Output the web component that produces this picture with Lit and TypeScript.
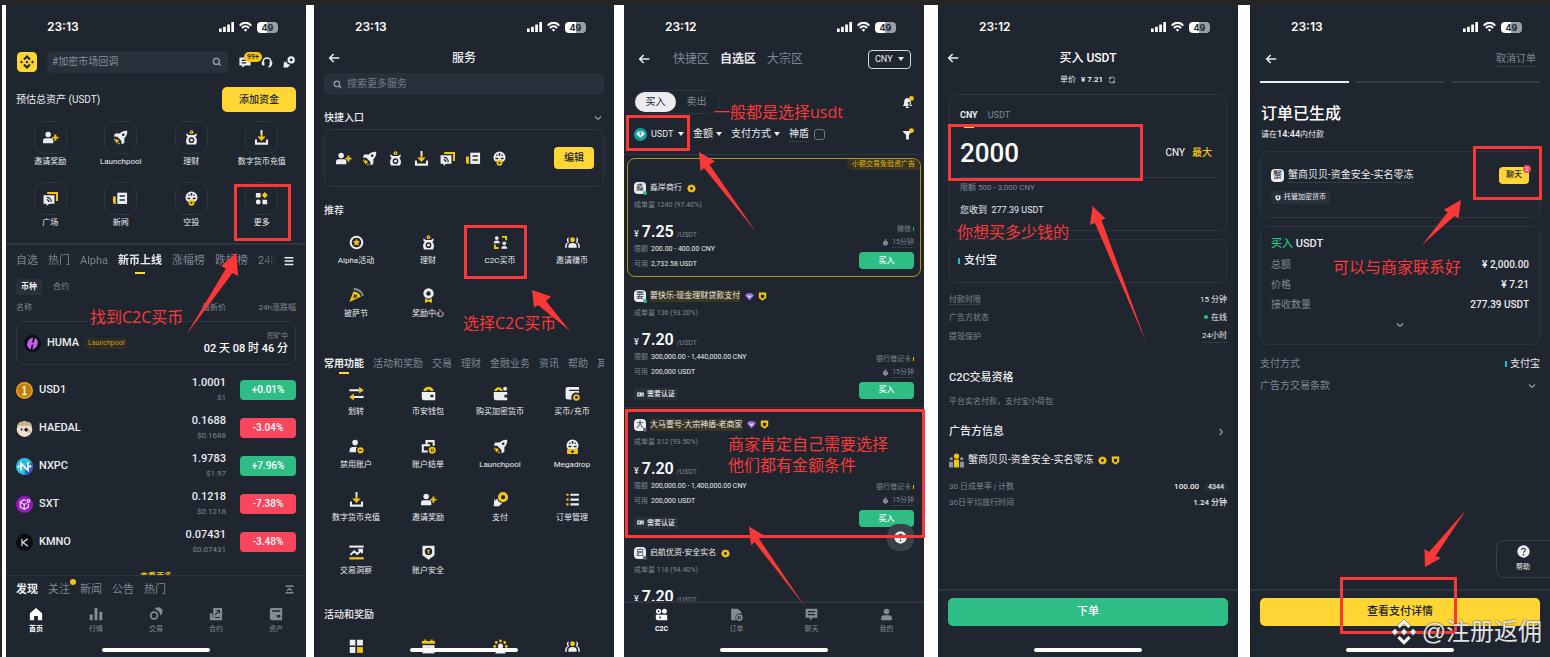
import { LitElement, html, svg, css, nothing } from "lit";
import { customElement, property } from "lit/decorators.js";
import { styleMap } from "lit/directives/style-map.js";
import { classMap } from "lit/directives/class-map.js";

/* ---------- icons: 16 x 16 grid, w = light parts, y = accent parts ---------- */

const ball = svg`
  <path class="w" d="M8 .6a6.400 6.400 0 0 0-6.400 6.400c0 1.700.8 3.100 1.800 4.100h9.200c1-1 1.800-2.400 1.800-4.100A6.400 6.400 0 0 0 8 .6z"/>
  <path class="k" d="M7.200 2.200h1.600v2.800H7.200zM3.400 7.200h3.300v1.500H4a4 4 0 0 1-.6-1.500zM9.300 7.200h3.300a4 4 0 0 1-.6 1.500H9.300zM4.600 3.800h1.300v1.500H4.600zM10.100 3.800h1.300v1.500h-1.300z"/>`;

const ICONS: Record<string, unknown> = {
  invite: svg`<circle class="w" cx="5.500" cy="4.700" r="2.900"/><path class="w" d="M0 14v-2.600C0 9.500 1.200 8.700 2.600 8.700h6c1.400 0 2.400.8 2.400 2.700V14z"/><path class="y" d="M12.200 4.800h2v2.300h2.300v2h-2.300v2.300h-2V9.100H9.900v-2h2.300z"/>`,
  rocket: svg`<path class="w" d="M15.200.8c-3.600-.2-5.900.8-7.900 3H2.200L.9 6.800l3.600.4 4.300 4.300.3 3.700 3-1.400V8.700c2.200-2 3.300-4.300 3.100-7.900z"/><circle class="k" cx="10.900" cy="5.100" r="1.400"/><path class="y" d="M4 9.200l1.100 1.500 1.600.9-1.600 1L4 14.600l-1-2-1.700-1 1.700-.9zM1 9.200h1.500v1.500H1zM5.600 13.600h1.500v1.500H5.600z"/>`,
  earn: svg`<circle class="y" cx="8" cy="2.300" r="2"/><circle class="k" cx="8" cy="2.300" r=".7"/><path class="w" d="M2.600 3.400l2.600 1.800h5.600l2.600-1.800v3l-1.500.8c1.300 1.300 1.900 2.900 1.900 4.600 0 1.400-.4 2.600-1 3.600H3.200c-.6-1-1-2.200-1-3.600 0-1.700.6-3.300 1.900-4.600l-1.500-.8z"/><circle class="k" cx="8" cy="10.800" r="3"/><circle class="w" cx="8" cy="10.800" r="1.500"/>`,
  deposit: svg`<path class="w" d="M7 0h2v5H7zM1 10h2.200v3.300h9.600V10H15v5.600H1z"/><path class="y" d="M7 4h2v3h3.500L8 11.700 3.500 7H7z"/>`,
  square: svg`<path class="y" d="M4.500 1H16v9.700h-2.200V3.200H4.500z"/><path class="w" d="M.6 4.400h11.600v9.200H6.800l-3 2.100v-2.100H.6z"/><path class="ks" d="M4 6.800c2.800 0 4.800 2 4.800 4.800M4 9.300c1.300 0 2.200 1 2.200 2.300"/>`,
  news: svg`<path class="y" d="M0 5.800h3v8H2.200A2.200 2.200 0 0 1 0 11.600z"/><path class="w" d="M4.600 1.800H15v12H4.600z"/><path class="k" d="M7.100 4.500h5.500v1.700H7.100zM7.100 8.800h5.500v1.600H7.100z"/>`,
  airdrop: svg`${ball}<circle class="yr" cx="8" cy="12.600" r="2.200"/>`,
  mega: svg`${ball}<path class="y" d="M2.200 10.800h11.600v5.200H2.200z"/><path class="k" d="M7.300 11.900h1.400v1h1v1.100h-1v1H7.300v-1h-1v-1.100h1z"/>`,
  more: svg`<path class="w" d="M2 2h5v5H2zM9 9.200h5v5H9z"/><circle class="w" cx="4.500" cy="11.700" r="2.600"/><path class="y" d="M11.500 1l3.300 3.400-3.300 3.400-3.300-3.400z"/>`,
  alpha: svg`<circle class="wr" cx="8" cy="8" r="6.200"/><path class="y" d="M8 4l1.200 2.500 2.700.3-2 1.900.6 2.700L8 10l-2.500 1.400.6-2.700-2-1.900 2.700-.3z"/>`,
  c2c: svg`<circle class="w" cx="4" cy="3.300" r="2"/><path class="w" d="M.8 8.700c0-2 1-2.900 3.200-2.900s3.200.9 3.200 2.900z"/><circle class="w" cx="12" cy="8.800" r="2"/><path class="w" d="M8.800 14.600c0-2 1-2.900 3.200-2.900s3.200.9 3.200 2.900z"/><path class="y" d="M9.500 1H15v4.600h-2V3H9.500zM1 10.200h2v2.700h3v2H1z"/>`,
  people: svg`<circle class="y" cx="8" cy="5" r="2.600"/><path class="w" d="M3.600 13.600V12c0-2.200 1.600-3.400 4.400-3.400s4.400 1.200 4.400 3.400v1.600zM4.200 2.300C2.600 2.700 2 4 2 5.200c0 1 .4 1.800 1 2.400C1.200 8.400.2 9.800.2 11.800v1.800h1.700v-2c0-1.900.8-3 2.400-4C3.500 6.200 3.300 4 4.200 2.300zM11.800 2.300C13.400 2.700 14 4 14 5.200c0 1-.4 1.800-1 2.400 1.800.8 2.800 2.200 2.800 4.200v1.800h-1.700v-2c0-1.900-.8-3-2.400-4 .8-1.400 1-3.600.1-5.300z"/>`,
  pizza: svg`<path class="g" d="M5.200 0c5.200 0 9.300 3.200 10.700 8l-1.900.7C12.800 4.700 9.600 2.300 5 2.200z"/><path class="y" d="M4.700 3.600c4 .2 6.800 2.400 8 5.800L.3 14.800z"/><path class="ks" d="M5 10.400l1.200-3.600M7.200 10.800l1-3.400M5.400 8.200l3 .8"/>`,
  reward: svg`<circle class="w" cx="8" cy="5.800" r="5.500"/><circle class="k" cx="8" cy="5.800" r="2.400"/><path class="y" d="M4.300 11l3.700 1.800 3.700-1.800v5L8 14.300 4.300 16z"/>`,
  transfer: svg`<path class="w" d="M.4 3.400h11v2.100H.4zM4.600 10.700h11v2.100h-11z"/><path class="y" d="M10.800.7l5 3.700-5 3.700zM5.200 8l-5 3.700 5 3.700z"/>`,
  wallet: svg`<path class="y" d="M2.400 5.400C3.200 2.400 5.200.9 8 .9s4.800 1.500 5.600 4.500h-3.300C9.700 4.200 9 3.700 8 3.700s-1.700.5-2.300 1.700z"/><path class="w" d="M.8 6.400h14.400v8.800H3.200A2.400 2.400 0 0 1 .8 12.800z"/><path class="k" d="M10 9.400h3.200V12H10z"/>`,
  buycrypto: svg`<path class="y" d="M1.200 5.400C2 2.600 3.600 1.200 6 1.200s3.800 1.400 4.600 4.200H7.800C7.400 4.400 6.800 3.900 6 3.900s-1.400.5-1.800 1.500z"/><circle class="w" cx="12.900" cy="3" r="2.100"/><path class="w" d="M.8 6.400h14.400v2.800h-3v3h3v3H3.200A2.400 2.400 0 0 1 .8 12.800z"/>`,
  buyfill: svg`<path class="w" d="M3 1h12v3H4.600v1.400H15v2.100c-1-.4-2-.6-3-.6-3 0-5.200 2.200-5.200 5 0 1 .2 1.800.6 2.500H3a2.400 2.400 0 0 1-2.400-2.400V3.400A2.400 2.400 0 0 1 3 1z"/><circle class="yr" cx="12.200" cy="12.200" r="2.500"/>`,
  banuser: svg`<circle class="w" cx="6.500" cy="3.800" r="3"/><path class="w" d="M.6 14v-2.200c0-2 1.300-3.400 3.200-3.400h4.800c-.9 1-1.300 2.100-1.300 3.300 0 .9.200 1.600.6 2.300z"/><circle class="y" cx="12.300" cy="12" r="3.300"/><path class="k" d="M10.600 11.400H14v1.200h-3.400z"/>`,
  statement: svg`<path class="w" d="M4.800 1h9.800v6.200h-2.200V3.400H7v2.200h2.600v2.100H3v4.500h4.200v2.100H.8V5.600h4z"/><circle class="yr" cx="12" cy="11.900" r="2.700"/><path class="y" d="M11.400 10.500h1.200V13h-1.200z"/>`,
  pay: svg`<circle class="yw" cx="10.700" cy="5.500" r="3.800"/><path class="w" d="M1.600 6.600L.7 15.200h5.600l3.500-3.600c-3 0-4.900-1.800-5.200-4.600L2.600 9z"/>`,
  orders: svg`<path class="y" d="M1.500 1.800h2.300v2.300H1.500zM1.500 6.900h2.300v2.300H1.500zM1.500 12h2.300v2.300H1.500z"/><path class="w" d="M5.800 1.800h9v2.300h-9zM5.800 6.900h9v2.300h-9zM5.800 12h9v2.300h-9z"/>`,
  insight: svg`<path class="w" d="M.4.600h15.200v2.200H.4z"/><path class="ws" d="M1.500 10.500L5.500 6.700l3.200 2.800 4.800-4.200M9.900 5h4v3.900"/><path class="y" d="M.4 13h15.200v2.400H.4z"/>`,
  security: svg`<path class="w" d="M1.600.8h12.800v10L8 15.600l-6.400-4.800z"/><circle class="k" cx="8" cy="6.800" r="3.900"/><path class="y" d="M8 4.400l1.800 1.900h-1v3H7.200v-3h-1z"/>`,
  tiles: svg`<path class="w" d="M.8.8h6v6h-6zM8.600.8h6.200v6H8.600zM.8 8.600h6v6.200h-6z"/><path class="y" d="M8.600 8.600h6.200v6.200H8.600z"/>`,
  calendar: svg`<path class="y" d="M1 2h2.500V.4h2V2h5V.4h2V2H15v3H1z"/><path class="w" d="M1.600 6.600h12.800v8.800H1.600z"/><path class="k" d="M4 9.500h6.500v1.500H4z"/>`,
  party: svg`<circle class="y" cx="8" cy="2" r="1.500"/><circle class="y" cx="3.500" cy="3.700" r="1.500"/><circle class="y" cx="12.500" cy="3.700" r="1.500"/><circle class="y" cx="1.800" cy="8" r="1.500"/><circle class="y" cx="14.200" cy="8" r="1.500"/><circle class="w" cx="8" cy="7.600" r="2.700"/><path class="w" d="M2.600 15.500c0-3 2-4.500 5.400-4.500s5.400 1.500 5.400 4.500z"/>`,
  logo: svg`<rect class="brand" width="16" height="16" rx="3.600"/><path class="k" d="M8 2.400l3 3-1.200 1.200L8 4.800 6.200 6.600 5 5.400zM3.600 6.800L4.800 8 3.600 9.200 2.400 8zM12.400 6.800L13.600 8l-1.200 1.200L11.200 8zM5 10.600l1.200-1.200L8 11.200l1.800-1.800 1.200 1.200-3 3zM8 6.800L9.200 8 8 9.200 6.800 8z"/>`,
  diamond: svg`<path class="w" d="M8 0l4.200 4.200-1.500 1.500L8 3 5.300 5.700 3.800 4.200zM2.400 5.900L4.500 8l-2.100 2.100L.3 8zM13.600 5.900L15.700 8l-2.100 2.100L11.500 8zM3.800 11.800l1.500-1.500L8 13l2.700-2.700 1.500 1.500L8 16zM8 5.900L10.100 8 8 10.100 5.900 8z"/>`,
  search: svg`<circle class="ln" cx="7" cy="7" r="4.800"/><path class="ln" d="M10.600 10.600l3.600 3.600"/>`,
  chat: svg`<path class="w" d="M.6 2h14.800v10.600H8l-3.600 3v-3H.6z"/><path class="k" d="M3.500 5h9v1.700h-9zM3.500 8.300h6V10h-6z"/>`,
  headset: svg`<path class="ws" d="M2.800 9.500V7.800a5.200 5.200 0 0 1 10.400 0v3.600c0 1.700-1.200 2.900-3.400 2.900"/><path class="w" d="M1 7.500h3.500v5.300H3A2 2 0 0 1 1 10.800zM15 7.500h-3.500v5.300H13a2 2 0 0 0 2-2z"/>`,
  paywhite: svg`<circle class="wt" cx="10.900" cy="5.200" r="3.400"/><path class="w" d="M1.400 6.600L.6 15.200h5.800l3.400-3.800c-3 0-4.900-1.700-5.200-4.500L2.600 9z"/>`,
  back: svg`<path class="ws" d="M15 8H2.400M7.600 2.600L2.200 8l5.400 5.400"/>`,
  down: svg`<path class="ln" d="M2 5l6 6 6-6"/>`,
  right: svg`<path class="ln" d="M5 2l6 6-6 6"/>`,
  menu: svg`<path class="w" d="M1 1.500h14v2.300H1zM1 6.900h14v2.300H1zM1 12.300h14v2.300H1z"/>`,
  collapse: svg`<path class="ln" d="M1 2h14M1 14h14M3.500 10.500L8 6.500l4.500 4"/>`,
  home: svg`<path class="c" d="M8 1l7 6.200V15h-4.800v-4.600H5.800V15H1V7.200z"/>`,
  bars: svg`<path class="c" d="M.8 8.500h3.400V15H.8zM6.300 1h3.400v14H6.300zM11.800 5.500h3.400V15h-3.400z"/>`,
  trade: svg`<circle class="cr" cx="5.800" cy="9.800" r="3.900"/><path class="c" d="M6.400 2.600A4.900 4.900 0 0 1 15.400 5.600c0 1.700-.9 3.200-2.400 4.100C12.800 6.200 10.200 3.200 6.400 2.600z"/>`,
  futures: svg`<path class="c" d="M4.800 1H15v14H1V7.200h3v4.600h.8z"/><path class="ks" d="M6.600 12h6M7 9l4.800-4.800M8.600 4h3.400v3.400"/>`,
  assets: svg`<path class="c" d="M3.400 1H15v14H3.400A2.400 2.400 0 0 1 1 12.600V3.400A2.400 2.400 0 0 1 3.400 1z"/><path class="k" d="M3.600 3.600h9.200v1.700H3.600zM9 9h4v3H9z"/>`,
  c2cnav: svg`<circle class="cr" cx="4.400" cy="4" r="2.200"/><circle class="c" cx="11.600" cy="4" r="3"/><path class="c" d="M1 8.400h14V15H3.400A2.400 2.400 0 0 1 1 12.600z"/><path class="k" d="M5.600 10.400h1.600V13H5.600z"/>`,
  ordernav: svg`<path class="c" d="M1.400 1h8.200L14 5v2.200c-.8-.3-1.600-.4-2.400-.4A5 5 0 0 0 6.600 12c0 1.100.3 2.100.9 3H1.400z"/><circle class="cr" cx="11.600" cy="11.800" r="3.200"/><path class="cl" d="M11.600 10v2h1.600"/>`,
  chatnav: svg`<path class="c" d="M.8 1h14.400v11H9.400L6 15.400V12H.8z"/><path class="k" d="M3.600 3.800h8.800v1.500H3.600zM3.600 7.400h8.800v1.500H3.600z"/>`,
  user: svg`<circle class="c" cx="8" cy="4.400" r="3.400"/><path class="c" d="M1.400 15v-2.600c0-2 1.400-3.400 3.400-3.400h6.400c2 0 3.400 1.400 3.400 3.400V15z"/>`,
  bell: svg`<path class="w" d="M6.400 2.600c3 0 5 2 5.200 4.700L12 11l1.600 2.200H1L2.600 11 3 7c.2-2.400 1.200-3.800 3.400-4.400z"/><path class="w" d="M5 14h4v2H5z"/><path class="ks" d="M10.500 8.500H8.300v1.800h2.200v2H8"/><circle class="y" cx="12.600" cy="3.200" r="3.200"/>`,
  funnel: svg`<path class="w" d="M.6 4h13L9.200 9.400v6H5.400v-6z"/><circle class="y" cx="12.600" cy="3.400" r="3.200"/>`,
  tether: svg`<circle class="teal" cx="8" cy="8" r="8"/><path class="w" d="M4.800 4.200h6.400l2 3.300L8 12.400 2.800 7.500z"/><path class="teal" d="M6 5.500h4v1H8.600V9H7.400V6.500H6z"/>`,
  medal: svg`<path class="y" d="M8 .5l2.300 1.600 2.800.1.900 2.700L15.800 8 14 11.100l-.9 2.700-2.800.1L8 15.500l-2.300-1.600-2.800-.1-.9-2.700L.2 8 2 4.900l.9-2.700 2.800-.1z"/><circle class="k" cx="8" cy="8" r="2.600"/>`,
  gem: svg`<path class="violet" d="M3.600 2h8.800L16 6.400 8 15 0 6.400z"/><path class="ws" d="M4.800 6.400L8 9.200l3.200-2.800"/>`,
  badge: svg`<path class="y" d="M1.400 1h13.200v9.600L8 15.400l-6.600-4.800z"/><path class="k" d="M5 5h6v4.200L8 11.400 5 9.200z"/>`,
  shield: svg`<path class="w" d="M1.400 1h13.200v9.400L8 15.400l-6.600-5z"/><path class="k" d="M5.400 4.600h5.200v3.600L8 10.400 5.400 8.200z"/>`,
  timer: svg`<circle class="g" cx="8" cy="9.600" r="5.600"/><path class="g" d="M5.600 1h4.800v2.400H5.600z"/><path class="ks" d="M8 7v3.200"/>`,
  id: svg`<path class="w" d="M.5 3.500h15v9H.5z"/><path class="k" d="M3 6.500h3.500v3H3zM9 6.500h4.500v1H9zM9 9h4.500v1H9z"/>`,
  refresh: svg`<path class="ln" d="M13.800 6.600A6 6 0 0 0 3 4.500V2M3 5.300h3.500M2.200 9.400A6 6 0 0 0 13 11.500V14M13 10.700H9.500"/>`,
  help: svg`<circle class="w" cx="8" cy="8" r="7.600"/><path class="ks" d="M5.700 6.300C5.700 4.800 6.700 4 8 4s2.300.8 2.300 2.100c0 1.500-2.300 1.600-2.300 3.400"/><circle class="k" cx="8" cy="12" r="1"/>`,
  huma: svg`<circle class="blk" cx="8" cy="8" r="8"/><path class="pink" d="M8.500 2.200L6.400 13.400C4 12.800 2.600 10.500 3 8c.4-2.800 2.600-4.800 5.500-5.800zM10.300 2.800c2 .8 3 2.700 2.700 5-.4 3-2.400 5-5.200 6z"/><path class="pink" d="M6 7.200h4.200v1.900H6z"/>`,
  usd1: svg`<circle class="gold2" cx="8" cy="8" r="8"/><circle class="gold1" cx="8" cy="8" r="6.700"/><path class="cream" d="M6 4.800L8.800 3.400V11h1.500v1.400H5.800V11h1.400V5.600L6 6z"/>`,
  haedal: svg`<circle class="sand" cx="8" cy="8.600" r="7.300"/><path class="brown" d="M.8 5.400L3 2.200l3-.8L8 .8l2.400.8 3 .8 1.800 3-2 .4-1.600-.8-1.800 1-1.800-1-2 1-2-.8-1.800.6z"/><circle class="blk" cx="5.300" cy="9" r=".9"/><circle class="blk" cx="9.600" cy="9.200" r="1.700"/><circle class="tan" cx="12.300" cy="10.800" r="1.300"/><path class="w" d="M6 11.600h4l-2 2z"/>`,
  nxpc: svg`<circle class="cyan" cx="8" cy="8" r="8"/><path class="blue" d="M8 16A8 8 0 0 0 15 4L9 8z"/><path class="nx" d="M4.600 12V5l6.600 6.400V4M2.500 9.500V7M13.400 9.200V6.500"/>`,
  sxt: svg`<circle class="purple" cx="8" cy="8" r="8"/><path class="thin" d="M9 4.200L7.600 3.500 4 5.600v4.800l3.800 2.200 3.800-2.200V7.400M4.200 5.800l3.500 2.200v4.400M7.800 8l2-1.200"/><circle class="thin" cx="11.600" cy="4.700" r="1.300"/>`,
  kmno: svg`<circle class="blk" cx="8" cy="8" r="7.900"/><path class="thin" d="M5.600 4.600v6.800M11 4.500L6.600 8l4.600 3.500"/>`,
  team: svg`<circle class="y" cx="8" cy="3.400" r="2.800"/><path class="y" d="M5.300 7h5.400v8.400H5.300z"/><path class="g" d="M0 9.200h4.400v6.200H0zM11.600 9.200H16v6.200h-4.400z"/><circle class="g" cx="2.400" cy="6" r="1.800"/><circle class="g" cx="13.600" cy="6" r="1.800"/>`,
};

const icon = (name: string, size = 15) =>
  html`<svg class="ico" width=${size} height=${size} viewBox="0 0 16 16" aria-hidden="true">${ICONS[name]}</svg>`;

const base = css`
  :host {
    --bg: #202630;
    --panel: #29303b;
    --line: #2e3540;
    --text: #eaecef;
    --muted: #7d8693;
    --gold: #f5c40c;
    --brand: #ffd633;
    --green: #2ebd85;
    --red: #f9465d;
    display: flex;
    flex-direction: column;
    flex: 1;
    min-width: 0;
    position: relative;
    overflow: hidden;
    background: var(--bg);
    color: var(--text);
    font-family: Roboto, "Noto Sans CJK SC", sans-serif;
    font-size: 10px;
    line-height: 14px;
  }
  * { box-sizing: border-box; }
  h1, h2, p, dl, dd, dt { margin: 0; font-weight: inherit; font-size: inherit; }
  button, input, select { font: inherit; color: inherit; background: none; border: 0; padding: 0; margin: 0; outline: 0; min-width: 0; }
  select { appearance: none; }
  a { color: inherit; text-decoration: none; }
  .ico { display: block; flex: none; overflow: visible; }
  .w { fill: #eceef0; } .y { fill: var(--gold); } .k { fill: var(--bg); } .g { fill: #8c939e; }
  .c { fill: currentColor; } .brand { fill: var(--brand); }
  .ws { fill: none; stroke: #eceef0; stroke-width: 2; }
  .ks { fill: none; stroke: var(--bg); stroke-width: 1.3; }
  .wr { fill: none; stroke: #eceef0; stroke-width: 2.200; }
  .wt { fill: none; stroke: #eceef0; stroke-width: 3; }
  .yr { fill: var(--bg); stroke: var(--gold); stroke-width: 2; }
  .yw { fill: none; stroke: var(--gold); stroke-width: 3.200; }
  .cr { fill: none; stroke: currentColor; stroke-width: 2; }
  .cl { fill: none; stroke: currentColor; stroke-width: 1.300; }
  .ln { fill: none; stroke: #98a0ab; stroke-width: 2.200; }
  .teal { fill: #14a09c; } .violet { fill: #a06ae8; } .blk { fill: #090c11; } .pink { fill: #c95bf0; }
  .gold1 { fill: #c27a0a; } .gold2 { fill: #eaa628; } .cream { fill: #fff0c0; } .sand { fill: #efdfca; } .tan { fill: #d8a988; }
  .brown { fill: #c9b18c; } .cyan { fill: #29c0e0; } .blue { fill: #2f5ad8; } .purple { fill: #9a17c4; }
  .nx { fill: none; stroke: #fff; stroke-width: 1.700; } .thin { fill: none; stroke: #e8e8ee; stroke-width: 1.100; }
  .tabs { display: flex; align-items: stretch; white-space: nowrap; overflow: hidden; color: var(--muted); }
  .tab { flex: none; position: relative; }
  .tab.on { color: var(--text); font-weight: 700; }
  .line.on::after { content: ""; position: absolute; left: 50%; bottom: 2px; width: 10px; margin-left: -5px; height: 2px; background: var(--brand); }
  .between { display: flex; justify-content: space-between; align-items: center; }
  .card { border: 1px solid var(--line); border-radius: 8px; }
  .muted { color: var(--muted); }
  .yellow { background: var(--brand); color: #202630; border-radius: 4px; font-weight: 500; text-align: center; }
  .dots { border-bottom: 1px dotted #4a515d; }
  .bar { align-self: center; width: 108px; height: 4px; border-radius: 2px; background: #fff; flex: none; }
  .nav { display: flex; }
  .nav a { flex: 1; display: flex; flex-direction: column; align-items: center; gap: 3px; font-size: 7px; line-height: 10px; color: #848b96; }
  .nav a.on { color: #fff; font-weight: 700; }
  .foot { margin-top: auto; border-top: 2px solid var(--line); padding: 7px 10px 5px; display: flex; flex-direction: column; }
  .foot .go { height: 28px; border-radius: 5px; font-size: 11px; font-weight: 500; }
  .foot .bar { margin-top: 22px; }
`;

@customElement("status-bar")
class StatusBar extends LitElement {
  @property() time = "23:13";
  static styles = css`
    :host { display: flex; align-items: center; height: 44px; flex: none; padding: 0 28px 0 41px; color: #fff; }
    .time { flex: 1; font: 600 12px/16px Inter, sans-serif; }
    .set { display: flex; align-items: center; gap: 5px; }
    .batt { width: 21px; height: 11px; border-radius: 4px; background: linear-gradient(90deg, #fff 50%, #9a9ea5 50%); color: #202630; font: 700 9px/11px Inter, sans-serif; text-align: center; }
    .f { fill: #fff; }
    .s { fill: none; stroke: #fff; stroke-width: 2; }
  `;
  render() {
    return html`<span class="time">${this.time}</span>
      <span class="set">
        <svg width="15" height="10" viewBox="0 0 15 10"><path class="f" d="M0 6.500h2.700V10H0zM4.100 4.800h2.700V10H4.100zM8.200 2.400h2.700V10H8.200zM12.300 0H15v10h-2.700z"/></svg>
        <svg width="13" height="10" viewBox="0 0 13 10"><path class="s" d="M.8 3.600C4-.3 9-.3 12.200 3.600M3 6c2-2.200 5-2.200 7 0"/><path class="f" d="M4.700 7.700c1.100-1 2.500-1 3.600 0L6.500 9.800z"/></svg>
        <span class="batt">49</span>
      </span>`;
  }
}

/* ---------- home ---------- */

const SHORTCUTS = [
  ["invite", "邀请奖励"], ["rocket", "Launchpool"], ["earn", "理财"], ["deposit", "数字货币充值"],
  ["square", "广场"], ["news", "新闻"], ["airdrop", "空投"], ["more", "更多"],
];
const COINS = [
  ["usd1", "USD1", "1.0001", "$1", "+0.01%"],
  ["haedal", "HAEDAL", "0.1688", "$0.1688", "-3.04%"],
  ["nxpc", "NXPC", "1.9783", "$1.97", "+7.96%"],
  ["sxt", "SXT", "0.1218", "$0.1218", "-7.38%"],
  ["kmno", "KMNO", "0.07431", "$0.07431", "-3.48%"],
];

@customElement("screen-home")
class ScreenHome extends LitElement {
  static styles = [base, css`
    .top { display: flex; align-items: center; height: 26px; padding: 0 11px; flex: none; }
    .find { flex: 1; display: flex; align-items: center; height: 22px; margin: 0 11px 0 10px; padding: 0 6px 0 5px; border-radius: 5px; background: var(--panel); }
    .find input { flex: 1; }
    .find input::placeholder { color: #858d99; }
    .acts { display: flex; gap: 10px; position: relative; }
    .count { position: absolute; left: 5px; top: -4px; padding: 0 3px; height: 10px; border-radius: 5px; background: var(--gold); color: #202630; font-size: 7px; line-height: 10px; font-weight: 500; }
    .total { margin: 12px 10px 0; height: 25px; flex: none; }
    .total .yellow { width: 74px; height: 25px; border-radius: 5px; }
    .grid { display: grid; grid-template-columns: repeat(4, 1fr); row-gap: 13px; padding: 0 9px; margin-top: 9px; }
    .grid a { display: flex; flex-direction: column; align-items: center; gap: 1px; font-size: 8px; line-height: 14px; white-space: nowrap; }
    .tile { width: 33px; height: 33px; border: 1px solid var(--line); border-radius: 11px; display: grid; place-items: center; }
    .cats { display: flex; align-items: center; margin-top: 13px; border-top: 2px solid var(--line); height: 33px; padding: 0 12px 0 10px; font-size: 11px; flex: none; }
    .cats .tabs { flex: 1; gap: 10px; height: 31px; margin-right: 7px; mask-image: linear-gradient(90deg, #000 94%, transparent); }
    .kinds { display: flex; gap: 6px; margin: 3px 10px 0; font-size: 8px; line-height: 16px; flex: none; }
    .kinds button { padding: 0 5px; border-radius: 3px; color: var(--muted); }
    .kinds .on { background: var(--panel); color: var(--text); font-weight: 700; }
    .wrap { flex: 1; min-height: 0; overflow: hidden; padding: 0 10px; display: flex; flex-direction: column; }
    table { width: 100%; border-collapse: collapse; table-layout: fixed; flex: none; }
    th { height: 26px; padding: 0; font-size: 8px; font-weight: 400; color: var(--muted); text-align: right; }
    th:first-child { text-align: left; }
    th:nth-child(2) { width: 80px; } th:last-child { width: 70px; }
    td { height: 38px; padding: 0; text-align: right; }
    .hot td { height: 50px; vertical-align: top; }
    .hot .card { height: 44px; padding: 0 7px; text-align: left; }
    .coin { display: flex; align-items: center; gap: 6px; font-size: 11px; font-weight: 500; }
    .lp { background: #2f2c26; color: #c89d10; font-size: 7px; line-height: 11px; padding: 0 3px; border-radius: 2px; font-weight: 400; }
    .left { text-align: right; color: #fff; font-weight: 500; font-size: 11px; }
    .left small { display: block; font-size: 7px; line-height: 12px; color: var(--muted); font-weight: 400; }
    .price { font-size: 11px; font-weight: 500; line-height: 15px; }
    .price small { display: block; font-size: 8px; font-weight: 400; color: var(--muted); }
    .pct { display: inline-block; width: 56px; line-height: 20px; border-radius: 4px; background: var(--green); color: #fff; font-weight: 500; text-align: center; vertical-align: middle; }
    .pct.dn { background: var(--red); }
    .all { color: var(--gold); font-size: 8px; line-height: 9px; margin-top: 11px; font-weight: 700; }
    .dock { border-top: 1px solid var(--line); display: flex; flex-direction: column; flex: none; padding-bottom: 5px; }
    .feed { display: flex; align-items: center; justify-content: space-between; height: 27px; padding: 0 12px 0 10px; font-size: 11px; }
    .feed .tabs { gap: 10px; overflow: visible; }
    .new::after { content: ""; position: absolute; right: -6px; top: -4px; width: 6px; height: 6px; border-radius: 3px; background: var(--gold); }
    .nav { padding-top: 4px; }
    .dock .bar { margin-top: 14px; }
  `];
  render() {
    return html`<status-bar time="23:13"></status-bar>
      <header class="top">${icon("logo", 20)}
        <label class="find"><input type="search" placeholder="#加密市场回调" aria-label="搜索" />${icon("search", 10)}</label>
        <span class="acts">${icon("chat", 12)}${icon("headset", 12)}${icon("paywhite", 12)}<span class="count">99+</span></span>
      </header>
      <div class="total between"><span>预估总资产 (USDT)</span><button class="yellow">添加资金</button></div>
      <nav class="grid">${SHORTCUTS.map(([i, t]) => html`<a href="#"><span class="tile">${icon(i, 15)}</span>${t}</a>`)}</nav>
      <div class="cats">
        <div class="tabs">${["自选", "热门", "Alpha", "新币上线", "涨幅榜", "跌幅榜", "24h"].map((t) => html`<button class=${classMap({ tab: true, line: true, on: t === "新币上线" })}>${t}</button>`)}</div>
        ${icon("menu", 10)}
      </div>
      <div class="kinds"><button class="on">币种</button><button>合约</button></div>
      <div class="wrap">
        <table>
          <thead><tr><th>名称</th><th>最新价</th><th>24h涨跌幅</th></tr></thead>
          <tbody>
            <tr class="hot"><td colspan="3"><div class="card between">
              <span class="coin">${icon("huma", 17)}HUMA<span class="lp">Launchpool</span></span>
              <span class="left"><small>挖矿中</small>02 天 08 时 46 分</span>
            </div></td></tr>
            ${COINS.map(([i, n, p, s, c]) => html`<tr>
              <td><span class="coin">${icon(i, 17)}${n}</span></td>
              <td class="price">${p}<small>${s}</small></td>
              <td><span class=${classMap({ pct: true, dn: c[0] === "-" })}>${c}</span></td>
            </tr>`)}
          </tbody>
        </table>
        <button class="all">查看更多</button>
      </div>
      <footer class="dock">
        <div class="feed"><div class="tabs"><button class="tab on">发现</button><button class="tab new">关注</button><button class="tab">新闻</button><button class="tab">公告</button><button class="tab">热门</button></div>${icon("collapse", 9)}</div>
        <nav class="nav"><a class="on" href="#">${icon("home", 14)}首页</a><a href="#">${icon("bars", 14)}行情</a><a href="#">${icon("trade", 14)}交易</a><a href="#">${icon("futures", 14)}合约</a><a href="#">${icon("assets", 14)}资产</a></nav>
        <span class="bar"></span>
      </footer>`;
  }
}

/* ---------- services ---------- */

@customElement("screen-services")
class ScreenServices extends LitElement {
  static styles = [base, css`
    .title { display: grid; grid-template-columns: 16px 1fr 16px; align-items: center; height: 18px; padding: 0 14px; flex: none; }
    .title h1 { text-align: center; font-size: 12px; font-weight: 500; }
    .find { display: flex; align-items: center; gap: 5px; height: 22px; margin: 6px 10px 0; padding: 0 9px; border-radius: 5px; background: var(--panel); flex: none; }
    .find input { flex: 1; }
    .find input::placeholder { color: #747c88; }
    h2 { margin: 17px 10px 0; font-weight: 500; flex: none; }
    .quick { margin: 16px 12px 0 10px; font-weight: 500; }
    .card { margin: 4px 10px 0; height: 58px; padding: 0 9px; flex: none; }
    .row { display: flex; gap: 11px; padding-left: 2px; }
    .card .yellow { width: 40px; height: 22px; }
    .grid { display: grid; grid-template-columns: repeat(4, 1fr); row-gap: 21px; margin: 17px 6px 0; flex: none; }
    .grid a { display: flex; flex-direction: column; align-items: center; gap: 5px; font-size: 8px; line-height: 12px; white-space: nowrap; }
    .tabs { gap: 9px; margin: 32px 10px 0; height: 24px; flex: none; }
    .tabs + .grid { margin-top: 10px; }
    .last { margin-top: 31px; }
    .bar { position: absolute; left: 50%; margin-left: -54px; bottom: 5px; }
  `];
  grid(items: string[][]) {
    return html`<nav class="grid">${items.map(([i, t]) => html`<a href="#">${icon(i, 15)}<span>${t}</span></a>`)}</nav>`;
  }
  render() {
    return html`<status-bar time="23:13"></status-bar>
      <header class="title"><button aria-label="返回">${icon("back", 12)}</button><h1>服务</h1></header>
      <label class="find">${icon("search", 9)}<input type="search" placeholder="搜索更多服务" aria-label="搜索更多服务" /></label>
      <div class="quick between">快捷入口${icon("down", 8)}</div>
      <div class="card between"><span class="row">${["invite", "rocket", "earn", "deposit", "square", "news", "airdrop"].map((i) => icon(i, 15))}</span><button class="yellow">编辑</button></div>
      <h2>推荐</h2>
      ${this.grid([["alpha", "Alpha活动"], ["earn", "理财"], ["c2c", "C2C买币"], ["people", "邀请赚币"], ["pizza", "披萨节"], ["reward", "奖励中心"]])}
      <div class="tabs">${["常用功能", "活动和奖励", "交易", "理财", "金融业务", "资讯", "帮助", "其他"].map((t, i) => html`<button class=${classMap({ tab: true, line: true, on: i === 0 })}>${t}</button>`)}</div>
      ${this.grid([
        ["transfer", "划转"], ["wallet", "币安钱包"], ["buycrypto", "购买加密货币"], ["buyfill", "买币/充币"],
        ["banuser", "禁用账户"], ["statement", "账户结单"], ["rocket", "Launchpool"], ["mega", "Megadrop"],
        ["deposit", "数字货币充值"], ["invite", "邀请奖励"], ["pay", "支付"], ["orders", "订单管理"],
        ["insight", "交易洞察"], ["security", "账户安全"],
      ])}
      <h2 class="last">活动和奖励</h2>
      ${this.grid([["tiles", ""], ["calendar", ""], ["party", ""], ["people", ""]])}
      <span class="bar"></span>`;
  }
}

/* ---------- C2C market ---------- */

interface Offer { mark: string; name: string; done: string; price: string; limit?: string; free?: string; pay?: string; tone?: string; ad?: boolean; verify?: boolean; plate?: boolean; online?: boolean; }
const OFFERS: Offer[] = [
  { mark: "淼", name: "淼岸商行", done: "1240 (97.40%)", price: "7.25", limit: "200.00 - 400.00 CNY", free: "2,732.58 USDT", pay: "微信", tone: "wx", ad: true, online: true },
  { mark: "要", name: "要快乐-现金理财贷款支付", done: "136 (93.20%)", price: "7.20", limit: "300,000.00 - 1,440,000.00 CNY", free: "200,000 USDT", pay: "银行借记卡", tone: "bank", verify: true, plate: true, online: true },
  { mark: "大", name: "大马壹号-大宗神盾-老商家", done: "312 (93.50%)", price: "7.20", limit: "200,000.00 - 1,400,000.00 CNY", free: "200,000 USDT", pay: "银行借记卡", tone: "bank", verify: true, plate: true },
  { mark: "启", name: "启航优资-安全实名", done: "118 (94.40%)", price: "7.20" },
];

@customElement("screen-market")
class ScreenMarket extends LitElement {
  static styles = [base, css`
    .head { display: flex; align-items: center; height: 20px; padding: 0 13px 0 14px; flex: none; font-size: 12px; }
    .head .tabs { flex: 1; gap: 11px; margin-left: 23px; line-height: 20px; }
    .pick { display: flex; align-items: center; gap: 5px; position: relative; }
    .pick::after { content: ""; border: 3px solid transparent; border-top: 4px solid currentColor; border-bottom: 0; }
    .boxed { border: 1px solid #d5d8dc; border-radius: 4px; height: 19px; padding: 0 6px; font-size: 9px; }
    .sides { margin: 21px 10px 0; height: 24px; flex: none; }
    .seg { display: flex; border: 1px solid var(--line); border-radius: 12px; height: 24px; padding: 1px 2px 1px 0; }
    .seg button { width: 41px; border-radius: 10px; color: var(--muted); }
    .seg .on { background: #eaecef; color: #202630; }
    .filters { display: flex; align-items: center; gap: 9px; height: 14px; margin: 13px 10px 0; flex: none; }
    .filters .pick { gap: 3px; }
    .filters .coin { gap: 4px; }
    .filters .coin select { font-size: 9px; }
    .check { display: flex; align-items: center; gap: 5px; }
    .check input { appearance: none; width: 11px; height: 11px; border: 1px solid #707884; border-radius: 3px; }
    .filters > .ico { margin-left: auto; }
    .list { flex: 1; min-height: 0; overflow: hidden; border-top: 1px solid var(--line); margin-top: 13px; }
    .offer { padding: 10px 10px 6px; border-bottom: 1px solid var(--line); font-size: 7px; line-height: 10px; }
    .offer.ad { position: relative; margin: 3px 3px 2px; border: 1px solid #b5940f; border-radius: 8px; padding: 22px 6px 7px; }
    .tag { position: absolute; right: 0; top: 0; background: #39341f; color: #e5b80e; font-size: 7px; line-height: 11px; padding: 0 5px; border-radius: 0 7px 0 7px; }
    .who { display: flex; align-items: center; gap: 4px; height: 14px; font-size: 8px; line-height: 12px; }
    .ava { position: relative; width: 12px; height: 12px; border-radius: 4px; background: #eaecef; color: #202630; text-align: center; flex: none; }
    .ava::after { content: ""; position: absolute; right: -1px; bottom: -1px; width: 4px; height: 4px; border-radius: 2px; background: #5a616d; }
    .ava.online::after { background: #20c77d; }
    .name { margin-right: 1px; font-size: 8px; }
    .plate { background: #39351f; }
    .done { margin-top: 4px; line-height: 12px; font-size: 7px; }
    .body { display: flex; justify-content: space-between; margin-top: 11px; }
    .price { display: flex; align-items: baseline; gap: 3px; line-height: 20px; height: 20px; font-size: 9px; color: #fff; }
    .price b { font-size: 16px; font-weight: 600; }
    .price span { font-size: 7px; color: var(--muted); }
    .kv { display: flex; gap: 3px; height: 10px; margin-top: 5px; }
    .price + .kv { margin-top: 2px; }
    .need { display: inline-flex; align-items: center; gap: 3px; margin-top: 11px; height: 12px; padding: 0 3px; background: var(--panel); border-radius: 2px; font-weight: 500; }
    .act { display: flex; flex-direction: column; align-items: flex-end; justify-content: flex-end; color: var(--muted); }
    .verify .act { padding-bottom: 2px; }
    .pay { display: flex; align-items: center; gap: 2px; }
    .pay::after { content: ""; width: 1px; height: 4px; background: #f0bc10; }
    .pay.wx::after { background: #20b97a; }
    .mins { display: flex; align-items: center; gap: 3px; margin: 3px 0 4px; }
    .buy { width: 55px; height: 17px; border-radius: 4px; background: var(--green); color: #fff; font-size: 8px; font-weight: 500; }
    .dock { border-top: 2px solid var(--line); padding: 5px 0; display: flex; flex-direction: column; flex: none; }
    .dock .bar { margin-top: 14px; }
    .float { position: absolute; right: 10px; bottom: 106px; width: 27px; height: 27px; border-radius: 11px; background: #3a414c; display: grid; place-items: center; }
  `];
  offer(o: Offer) {
    return html`<article class=${classMap({ offer: true, ad: !!o.ad, verify: !!o.verify })}>
      ${o.ad ? html`<span class="tag">小额交易免验资广告</span>` : nothing}
      <div class="who"><span class=${classMap({ ava: true, online: !!o.online })}>${o.mark}</span><span class=${classMap({ name: true, plate: !!o.plate })}>${o.name}</span>${o.plate ? html`${icon("gem", 9)}${icon("badge", 9)}` : icon("medal", 9)}</div>
      <p class="done muted">成单量 ${o.done}</p>
      <div class="body">
        <div>
          <p class="price">¥ <b>${o.price}</b><span>/USDT</span></p>
          ${o.limit ? html`<p class="kv"><span class="muted">限额</span><span>${o.limit}</span></p>
          <p class="kv"><span class="muted">可用</span><span>${o.free}</span></p>` : nothing}
          ${o.verify ? html`<span class="need">${icon("id", 7)}需要认证</span>` : nothing}
        </div>
        ${o.pay ? html`<div class="act"><span class="pay ${o.tone}">${o.pay}</span><span class="mins">${icon("timer", 7)}<span class="dots">15分钟</span></span><button class="buy">买入</button></div>` : nothing}
      </div>
    </article>`;
  }
  render() {
    return html`<status-bar time="23:12"></status-bar>
      <header class="head"><button aria-label="返回">${icon("back", 12)}</button>
        <div class="tabs"><button class="tab">快捷区</button><button class="tab on">自选区</button><button class="tab">大宗区</button></div>
        <label class="pick boxed"><select aria-label="法币"><option>CNY</option></select></label>
      </header>
      <div class="sides between"><div class="seg"><button class="on">买入</button><button>卖出</button></div>${icon("bell", 12)}</div>
      <div class="filters">
        <label class="pick coin">${icon("tether", 13)}<select aria-label="币种"><option>USDT</option></select></label>
        <label class="pick"><select aria-label="金额"><option>金额</option></select></label>
        <label class="pick"><select aria-label="支付方式"><option>支付方式</option></select></label>
        <label class="check"><span class="dots">神盾</span><input type="checkbox" /></label>
        ${icon("funnel", 12)}
      </div>
      <section class="list">${OFFERS.map((o) => this.offer(o))}</section>
      <button class="float" aria-label="帮助">${icon("help", 13)}</button>
      <footer class="dock">
        <nav class="nav"><a class="on" href="#">${icon("c2cnav", 13)}C2C</a><a href="#">${icon("ordernav", 13)}订单</a><a href="#">${icon("chatnav", 13)}聊天</a><a href="#">${icon("user", 13)}我的</a></nav>
        <span class="bar"></span>
      </footer>`;
  }
}

/* ---------- buy form ---------- */

@customElement("screen-buy")
class ScreenBuy extends LitElement {
  static styles = [base, css`
    .title { display: grid; grid-template-columns: 16px 1fr 16px; align-items: center; height: 18px; padding: 0 9px; flex: none; }
    .title h1 { text-align: center; font-size: 12px; font-weight: 500; color: #fff; }
    .unit { display: flex; justify-content: center; align-items: center; gap: 5px; margin-top: 7px; font-size: 8px; line-height: 12px; }
    .unit b { font-weight: 500; color: #fff; }
    .card { margin: 8px 11px 0; padding: 14px 10px; }
    .card .tabs { gap: 10px; line-height: 13px; overflow: visible; font-size: 9px; }
    .card .tab { height: 19px; padding-bottom: 6px; }
    .card .tab.on::after { bottom: 0; }
    .sum { display: flex; align-items: center; gap: 7px; height: 36px; margin-top: 7px; color: #fff; }
    .sum input { flex: 1; font-size: 26px; font-weight: 500; height: 36px; }
    .sum button { color: var(--gold); font-weight: 500; margin-right: 4px; }
    .limit { border-top: 1px solid var(--line); margin-top: 6px; padding-top: 4px; font-size: 8px; line-height: 12px; }
    .get { margin-top: 10px; font-size: 9px; line-height: 12px; }
    .pay { display: flex; align-items: center; gap: 4px; height: 44px; padding: 0 8px; font-size: 11px; font-weight: 500; }
    .pay::before { content: ""; width: 2px; height: 6px; background: #12c4cf; }
    dl { margin: 11px 11px 0; display: grid; gap: 6px; font-size: 8px; line-height: 12px; }
    dt { color: var(--muted); }
    .on-line::before { content: ""; display: inline-block; width: 4px; height: 4px; border-radius: 2px; background: #20c77d; margin-right: 3px; vertical-align: 1px; }
    h2 { margin: 27px 11px 0; font-size: 11px; line-height: 16px; font-weight: 500; }
    .hint { margin: 10px 11px 0; font-size: 8px; line-height: 12px; }
    .info { margin-top: 16px; padding-right: 2px; }
    .who { display: flex; align-items: center; gap: 4px; margin: 12px 11px 0; line-height: 16px; }
    .stats { margin-top: 13px; gap: 4px; }
    .stats dd { font-weight: 500; }
    .chip { background: var(--panel); padding: 0 3px; margin-left: 6px; font-size: 7px; border-radius: 2px; }
    .go { background: var(--green); color: #fff; }
  `];
  render() {
    return html`<status-bar time="23:12"></status-bar>
      <header class="title"><button aria-label="返回">${icon("back", 12)}</button><h1>买入 USDT</h1></header>
      <p class="unit">单价 <b>¥ 7.21</b>${icon("refresh", 8)}</p>
      <section class="card">
        <div class="tabs"><button class="tab line on">CNY</button><button class="tab">USDT</button></div>
        <label class="sum"><input value="2000" inputmode="decimal" aria-label="金额" /><span>CNY</span><button>最大</button></label>
        <p class="limit muted">限额 500 - 3,000 CNY</p>
        <p class="get">您收到&nbsp; 277.39 USDT</p>
      </section>
      <section class="card pay">支付宝</section>
      <dl>
        <div class="between"><dt><span class="dots">付款时限</span></dt><dd>15 分钟</dd></div>
        <div class="between"><dt>广告方状态</dt><dd class="on-line">在线</dd></div>
        <div class="between"><dt>提现保护</dt><dd class="dots">24小时</dd></div>
      </dl>
      <h2>C2C交易资格</h2>
      <p class="hint muted">平台实名付款，支付宝小荷包</p>
      <h2 class="info between">广告方信息${icon("right", 8)}</h2>
      <div class="who">${icon("team", 15)}蟹商贝贝-资金安全-实名零冻 ${icon("medal", 9)} ${icon("badge", 9)}</div>
      <dl class="stats">
        <div class="between"><dt>30 日成单率 | 计数</dt><dd>100.00<span class="chip">4344</span></dd></div>
        <div class="between"><dt>30日平均放行时间</dt><dd>1.24 分钟</dd></div>
      </dl>
      <footer class="foot"><button class="go">下单</button><span class="bar"></span></footer>`;
  }
}

/* ---------- order ---------- */

@customElement("screen-order")
class ScreenOrder extends LitElement {
  static styles = [base, css`
    .head { height: 20px; padding: 0 14px 0 15px; flex: none; }
    .steps { display: grid; grid-template-columns: repeat(3, 1fr); gap: 6px; margin: 12px 10px 0; }
    .steps i { height: 2px; background: #343b46; }
    .steps i:first-child { background: #eaecef; }
    h1 { margin: 20px 11px 0; font-size: 16px; line-height: 22px; font-weight: 500; color: #fff; }
    .sub { margin: 3px 11px 0; font-size: 8px; line-height: 12px; }
    .sub b { font-weight: 600; font-size: 9px; }
    .card { margin: 10px 10px 0; padding: 14px 10px 13px; }
    .row { height: 18px; }
    .who { display: flex; align-items: center; gap: 4px; }
    .ava { width: 13px; height: 13px; border-radius: 4px; background: #eaecef; color: #202630; font-size: 9px; line-height: 13px; text-align: center; }
    .chat { position: relative; width: 30px; height: 17px; font-size: 8px; }
    .num { position: absolute; right: -2px; top: -2px; width: 8px; height: 8px; border-radius: 4px; background: var(--red); color: #fff; font-size: 6px; line-height: 8px; text-align: center; }
    .safe { display: inline-flex; align-items: center; gap: 3px; height: 13px; margin-top: 7px; padding: 0 4px; border-radius: 3px; background: var(--panel); font-size: 7px; line-height: 13px; vertical-align: top; }
    .detail { margin-top: 8px; padding: 9px 10px 15px; }
    h2 { font-size: 11px; line-height: 16px; font-weight: 500; }
    h2 span { color: #20c77d; }
    dl { display: grid; gap: 6px; margin-top: 6px; }
    dt { color: var(--muted); }
    dd { font-weight: 500; }
    .fold { display: block; margin: 9px auto 0; }
    .terms { margin: 12px 10px 0; gap: 8px; }
    .terms dd { font-weight: 400; }
    .ali::before { content: ""; display: inline-block; width: 2px; height: 6px; background: #12c4cf; margin-right: 3px; }
    .terms .ico { margin-right: 4px; }
    .float { position: absolute; right: -8px; bottom: 79px; width: 62px; height: 38px; border: 1px solid #3a414d; border-radius: 8px; background: var(--bg); padding: 4px 8px 0 0; display: flex; flex-direction: column; align-items: center; gap: 4px; font-size: 7px; line-height: 10px; }
  `];
  render() {
    return html`<status-bar time="23:13"></status-bar>
      <header class="head between"><button aria-label="返回">${icon("back", 12)}</button><button class="muted dots">取消订单</button></header>
      <div class="steps"><i></i><i></i><i></i></div>
      <h1>订单已生成</h1>
      <p class="sub">请在<b>14:44</b>内付款</p>
      <section class="card">
        <div class="row between"><span class="who"><span class="ava">蟹</span><a class="dots" href="#">蟹商贝贝-资金安全-实名零冻</a></span><button class="yellow chat">聊天<span class="num">2</span></button></div>
        <span class="safe">${icon("shield", 6)}托管加密货币</span>
      </section>
      <section class="card detail">
        <h2><span>买入</span> USDT</h2>
        <dl>
          <div class="between"><dt>总额</dt><dd>¥ 2,000.00</dd></div>
          <div class="between"><dt>价格</dt><dd>¥ 7.21</dd></div>
          <div class="between"><dt>接收数量</dt><dd>277.39 USDT</dd></div>
        </dl>
        <button class="fold" aria-label="展开">${icon("down", 8)}</button>
      </section>
      <dl class="terms">
        <div class="between"><dt>支付方式</dt><dd class="ali">支付宝</dd></div>
        <div class="between"><dt>广告方交易条款</dt><dd>${icon("down", 8)}</dd></div>
      </dl>
      <button class="float">${icon("help", 13)}帮助</button>
      <footer class="foot"><button class="go yellow">查看支付详情</button><span class="bar"></span></footer>`;
  }
}

/* ---------- page with the red hand-drawn marks ---------- */

interface Marks { boxes: number[][]; arrows: string[]; notes: [number, number, string][]; }
const MARKS: Record<string, Marks> = {
  home: { boxes: [[228, 179, 57, 57]], arrows: ["230.500,248 215,261 220,263.500 180.500,329.500 226.500,268 232,271"], notes: [[84, 302, "找到C2C买币"]] },
  services: { boxes: [[150, 220, 63, 54]], arrows: ["218,285 237,291.500 232,296 256,326 224,300 220,302.500"], notes: [[149, 308, "选择C2C买币"]] },
  market: {
    boxes: [[2, 110, 64, 36], [1, 404, 300, 129]],
    arrows: ["75,147 91,156.500 85.500,159.500 132,227 80,163 76.500,166", "125,521.500 140,530.500 135,533.500 180.500,601 130.500,537 127,540.500"],
    notes: [[90, 97, "一般都是选择usdt"], [104, 429, "商家肯定自己需要选择"], [104, 450, "他们都有金额条件"]],
  },
  buy: { boxes: [[10, 119, 195, 57]], arrows: ["154.500,201 167.500,213.500 163.500,215 208,337 157,218 152,220"], notes: [[19, 217, "你想买多少钱的"]] },
  order: {
    boxes: [[223, 141, 69, 54], [90, 572, 117, 57]],
    arrows: ["211,195 194,204.500 197.500,207.500 172,240 204.500,211 208.500,213.500", "175,562 174.500,544 179,547 216,505 185.500,551 191,553"],
    notes: [[83, 252, "可以与商家联系好"]],
  },
};

@customElement("app-root")
class AppRoot extends LitElement {
  static styles = css`
    :host { display: block; height: 100vh; overflow: hidden; background: #fff; border-top: 5px solid #262626; box-sizing: border-box; }
    .strip { display: flex; height: 100%; border-left: 2px solid #262626; padding-left: 4px; box-sizing: border-box; }
    .phone { position: relative; flex: 1; min-width: 0; display: flex; }
    .services { margin-left: 8px; }
    .market { margin-left: 10px; }
    .buy { margin-left: 14px; }
    .order { margin-left: 12px; }
    .ink { position: absolute; left: 0; top: 0; width: 300px; height: 652px; overflow: visible; pointer-events: none; }
    .box { fill: none; stroke: #fb3838; stroke-width: 3; }
    .arrow { fill: #fb3838; }
    .note { position: absolute; margin: 0; color: #fb3838; font: 16px/21px "Open Sans", "Noto Sans CJK SC", sans-serif; white-space: nowrap; }
    .water { position: absolute; right: 8px; bottom: 10px; display: flex; align-items: center; gap: 5px; color: rgba(255, 255, 255, 0.88); font: 24px/30px "Liberation Sans", "Noto Sans CJK SC", sans-serif; white-space: nowrap; text-shadow: 0 0 2px #202630; }
    .w { fill: #f2f2f2; stroke: #444; stroke-width: 0.3; }
  `;
  marks(key: string) {
    const m = MARKS[key];
    return html`<svg class="ink" viewBox="0 0 300 652" aria-hidden="true">
        ${m.boxes.map(([x, y, w, h]) => svg`<rect class="box" x=${x + 1.5} y=${y + 1.5} width=${w - 3} height=${h - 3}/>`)}
        ${m.arrows.map((p) => svg`<polygon class="arrow" points=${p}/>`)}
      </svg>
      ${m.notes.map(([x, y, t]) => html`<p class="note" style=${styleMap({ left: x + "px", top: y + "px" })}>${t}</p>`)}`;
  }
  render() {
    return html`<main class="strip">
      <div class="phone home"><screen-home></screen-home>${this.marks("home")}</div>
      <div class="phone services"><screen-services></screen-services>${this.marks("services")}</div>
      <div class="phone market"><screen-market></screen-market>${this.marks("market")}</div>
      <div class="phone buy"><screen-buy></screen-buy>${this.marks("buy")}</div>
      <div class="phone order"><screen-order></screen-order>${this.marks("order")}
        <div class="water">${icon("diamond", 26)}<span>@注册返佣</span></div>
      </div>
    </main>`;
  }
}
